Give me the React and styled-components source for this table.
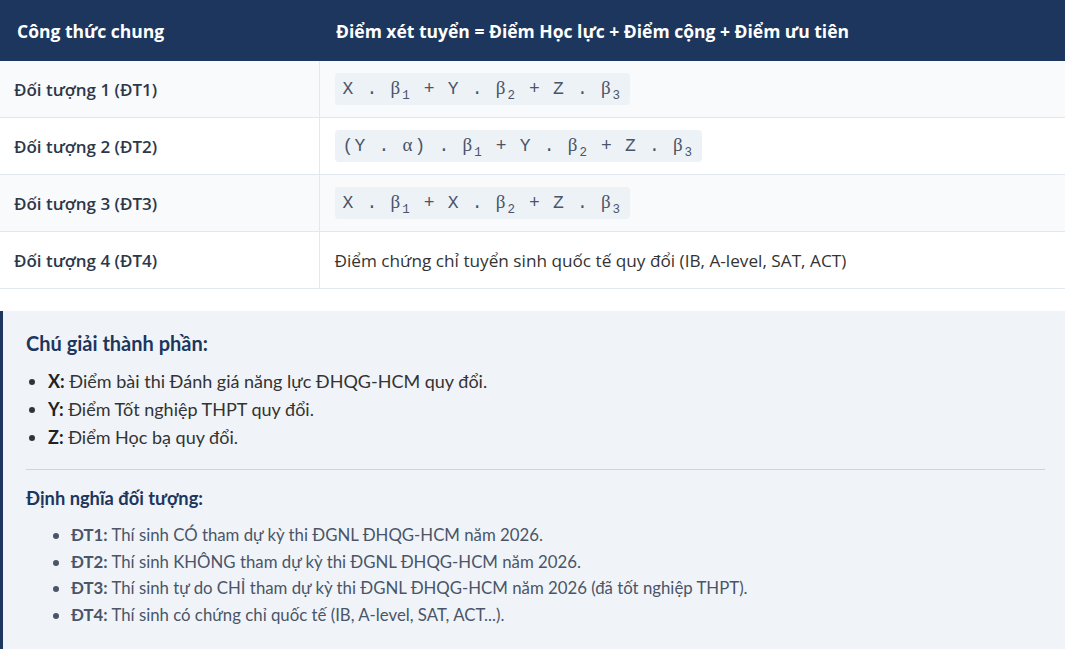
import React from 'react'
import styled, { createGlobalStyle } from 'styled-components'

const NAVY = '#1c365e'

const GlobalStyle = createGlobalStyle`
  html, body {
    margin: 0;
    padding: 0;
    background: #fff;
  }
  body {
    font-family: "Open Sans", "Noto Sans", sans-serif;
    color: #2d3748;
  }
`

const Root = styled.div`
  display: flex;
  flex-direction: column;
  width: 1065px;
`

const Table = styled.table`
  width: 100%;
  border-collapse: collapse;
  font-family: "Open Sans", "Noto Sans", sans-serif;
`

const HeadCell = styled.th`
  height: 61px;
  padding: 0 16px 0 17px;
  background: ${NAVY};
  color: #fff;
  font-size: 17.5px;
  font-weight: 700;
  text-align: left;
  &:first-child {
    width: 286px;
  }
`

const Row = styled.tr`
  background: ${({ $striped }) => ($striped ? '#f8fafc' : '#fff')};
  border-bottom: 1px solid #e2e8f0;
`

const LabelCell = styled.td`
  height: 56px;
  padding: 0 14px;
  border-right: 1px solid #e2e8f0;
  font-size: 17px;
  font-weight: 600;
  color: #2d3748;
`

const ValueCell = styled.td`
  padding: 0 15px;
  font-size: 17.2px;
  color: #333;
`

const Code = styled.code`
  display: inline-block;
  padding: 4px 8px 5px;
  border-radius: 4px;
  background: #edf2f7;
  font-family: "Liberation Mono", "Courier New", monospace;
  font-size: 18px;
  letter-spacing: 1.2px;
  color: #4a5568;
  line-height: 22px;
  sub {
    font-size: 12.5px;
    line-height: 0;
    letter-spacing: 0;
    margin-right: 2px;
  }
`

const Greek = styled.span`
  font-family: "Liberation Serif", "DejaVu Serif", serif;
  font-size: 19px;
  letter-spacing: 0;
  margin-right: 2px;
`

const Gap = styled.div`
  height: 22px;
`

const Legend = styled.section`
  display: flex;
  flex-direction: column;
  padding: 20px 20px 22px 23px;
  background: #f0f4f8;
  border-left: 3px solid ${NAVY};
  font-family: Lato, "Open Sans", sans-serif;
`

const Title = styled.h3`
  margin: 0 0 12px;
  font-size: ${({ $small }) => ($small ? '18.3px' : '20px')};
  font-weight: 700;
  color: ${NAVY};
  line-height: 24px;
`

const List = styled.ul`
  margin: 0;
  padding-left: ${({ $indent }) => ($indent ? '45px' : '22px')};
  font-size: ${({ $indent }) => ($indent ? '16.8px' : '18px')};
  color: ${({ $indent }) => ($indent ? '#4a5568' : '#333')};
`

const Item = styled.li`
  line-height: ${({ $tight }) => ($tight ? '26.6px' : '28px')};
  b {
    color: ${({ $tight }) => ($tight ? '#4a5568' : '#222')};
  }
`

const Divider = styled.hr`
  width: 100%;
  margin: 18px 0 16px;
  border: 0;
  border-top: 1px solid #cbd5e1;
`

// β / α get a serif face, single digits become subscripts
const rows = [
  { label: 'Đối tượng 1 (ĐT1)', formula: ['X . ', 'β', '1', ' + Y . ', 'β', '2', ' + Z . ', 'β', '3'] },
  { label: 'Đối tượng 2 (ĐT2)', formula: ['(Y . ', 'α', ') . ', 'β', '1', ' + Y . ', 'β', '2', ' + Z . ', 'β', '3'] },
  { label: 'Đối tượng 3 (ĐT3)', formula: ['X . ', 'β', '1', ' + X . ', 'β', '2', ' + Z . ', 'β', '3'] },
  { label: 'Đối tượng 4 (ĐT4)', text: 'Điểm chứng chỉ tuyển sinh quốc tế quy đổi (IB, A-level, SAT, ACT)' },
]

const parts = [
  ['X:', 'Điểm bài thi Đánh giá năng lực ĐHQG-HCM quy đổi.'],
  ['Y:', 'Điểm Tốt nghiệp THPT quy đổi.'],
  ['Z:', 'Điểm Học bạ quy đổi.'],
]

const groups = [
  ['ĐT1:', 'Thí sinh CÓ tham dự kỳ thi ĐGNL ĐHQG-HCM năm 2026.'],
  ['ĐT2:', 'Thí sinh KHÔNG tham dự kỳ thi ĐGNL ĐHQG-HCM năm 2026.'],
  ['ĐT3:', 'Thí sinh tự do CHỈ tham dự kỳ thi ĐGNL ĐHQG-HCM năm 2026 (đã tốt nghiệp THPT).'],
  ['ĐT4:', 'Thí sinh có chứng chỉ quốc tế (IB, A-level, SAT, ACT...).'],
]

function Formula({ pieces }) {
  return (
    <Code>
      {pieces.map((p, i) => {
        if (p === 'β' || p === 'α') return <Greek key={i}>{p}</Greek>
        if (/^\d$/.test(p)) return <sub key={i}>{p}</sub>
        return <span key={i}>{p}</span>
      })}
    </Code>
  )
}

export default function App() {
  return (
    <Root>
      <GlobalStyle />
      <Table>
        <thead>
          <tr>
            <HeadCell>Công thức chung</HeadCell>
            <HeadCell>Điểm xét tuyển = Điểm Học lực + Điểm cộng + Điểm ưu tiên</HeadCell>
          </tr>
        </thead>
        <tbody>
          {rows.map((r, i) => (
            <Row key={r.label} $striped={i % 2 === 0}>
              <LabelCell>{r.label}</LabelCell>
              <ValueCell>{r.formula ? <Formula pieces={r.formula} /> : r.text}</ValueCell>
            </Row>
          ))}
        </tbody>
      </Table>
      <Gap />
      <Legend>
        <Title>Chú giải thành phần:</Title>
        <List>
          {parts.map(([k, v]) => (
            <Item key={k}><b>{k}</b> {v}</Item>
          ))}
        </List>
        <Divider />
        <Title $small>Định nghĩa đối tượng:</Title>
        <List $indent>
          {groups.map(([k, v]) => (
            <Item key={k} $tight><b>{k}</b> {v}</Item>
          ))}
        </List>
      </Legend>
    </Root>
  )
}
